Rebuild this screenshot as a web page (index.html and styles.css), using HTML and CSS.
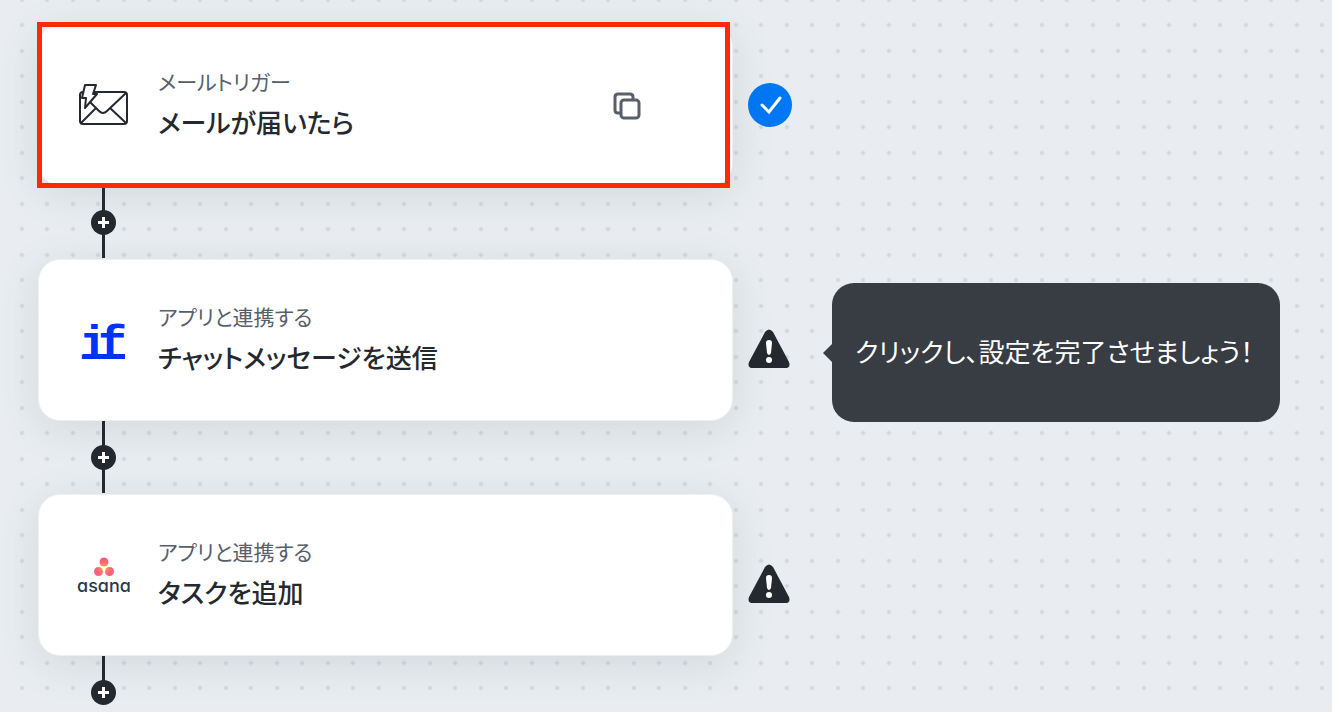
FILE: index.html
```html
<!DOCTYPE html>
<html lang="ja">
  <head>
    <meta charset="UTF-8" />
    <meta name="viewport" content="width=device-width, initial-scale=1.0" />
    <title>フロー</title>
    <link rel="stylesheet" href="styles.css">
  </head>
  <body>
    <main class="flow">
      <section class="step">
        <article class="card selected">
          <div class="card-icon">
            <svg width="52" height="52" viewBox="0 0 52 52" fill="none" stroke="#24292f" stroke-width="2" stroke-linejoin="round" stroke-linecap="round">
              <rect x="2" y="12" width="47" height="32" rx="3" />
              <path d="M48 13L29 31q-4 4-8 0L12 22M3 43l15-15M48 43L32 28" />
              <path d="M7 5h11l-3 9h4L7 28l1-10H4z" fill="#fff" />
            </svg>
          </div>
          <div class="card-text">
            <p class="card-type">メールトリガー</p>
            <h2 class="card-title">メールが届いたら</h2>
          </div>
          <button class="copy" type="button" aria-label="コピー">
            <svg width="28" height="28" viewBox="0 0 28 28" fill="none" stroke="#57606a" stroke-width="3" stroke-linejoin="round">
              <path d="M7 21H5q-3 0-3-3V5q0-3 3-3h12q3 0 3 3v2" />
              <rect x="8" y="8" width="18" height="18" rx="3" />
            </svg>
          </button>
        </article>
        <div class="status">
          <svg width="44" height="44" viewBox="0 0 44 44" fill="none">
            <circle cx="22" cy="22" r="22" fill="#0077f4" />
            <path d="M14 22l7 7 11-14" stroke="#fff" stroke-width="3" stroke-linecap="round" />
          </svg>
        </div>
      </section>

      <div class="connector">
        <button class="add" type="button" aria-label="追加"></button>
      </div>

      <section class="step">
        <article class="card">
          <div class="card-icon">
            <svg class="logo-if" width="52" height="52" viewBox="0 0 52 52">
              <text x="1 20" y="44">if</text>
              <rect x="5" y="39" width="42" height="5" />
            </svg>
          </div>
          <div class="card-text">
            <p class="card-type">アプリと連携する</p>
            <h2 class="card-title">チャットメッセージを送信</h2>
          </div>
        </article>
        <div class="status warning">
          <svg width="42" height="40" viewBox="0 0 42 40">
            <path d="M17 3q4-5 8 0l16 30q2 6-4 6H5q-6 0-4-6z" fill="#24292f" />
            <path d="M21 11q3 0 3 3l-1 10q-2 4-4 0l-1-10q0-3 3-3z" fill="#fff" />
            <circle cx="21" cy="31" r="3" fill="#fff" />
          </svg>
          <div class="tooltip" role="tooltip">クリックし、設定を完了させましょう！</div>
        </div>
      </section>

      <div class="connector">
        <button class="add" type="button" aria-label="追加"></button>
      </div>

      <section class="step">
        <article class="card">
          <div class="card-icon logo-asana">
            <svg width="20" height="20" viewBox="0 0 20 20">
              <defs>
                <radialGradient id="coral" gradientUnits="userSpaceOnUse" cx="10" cy="11" r="11">
                  <stop offset="0" stop-color="#ffb32e" />
                  <stop offset="0.6" stop-color="#fc6478" />
                  <stop offset="1" stop-color="#fc5a85" />
                </radialGradient>
              </defs>
              <g fill="url(#coral)">
                <circle cx="10" cy="5" r="4.5" />
                <circle cx="4.5" cy="14.5" r="4.5" />
                <circle cx="15.5" cy="14.5" r="4.5" />
              </g>
            </svg>
            <span>asana</span>
          </div>
          <div class="card-text">
            <p class="card-type">アプリと連携する</p>
            <h2 class="card-title">タスクを追加</h2>
          </div>
        </article>
        <div class="status warning">
          <svg width="42" height="40" viewBox="0 0 42 40">
            <path d="M17 3q4-5 8 0l16 30q2 6-4 6H5q-6 0-4-6z" fill="#24292f" />
            <path d="M21 11q3 0 3 3l-1 10q-2 4-4 0l-1-10q0-3 3-3z" fill="#fff" />
            <circle cx="21" cy="31" r="3" fill="#fff" />
          </svg>
        </div>
      </section>

      <div class="connector last">
        <button class="add" type="button" aria-label="追加"></button>
      </div>
    </main>
  </body>
</html>
```
FILE: styles.css
```css
* {
  margin: 0;
  padding: 0;
  box-sizing: border-box;
}

/* dotted canvas, four dots in each tile */
body {
  min-height: 100vh;
  font-family: "Noto Sans CJK JP", sans-serif;
  font-feature-settings: "palt";
  color: #24292f;
  background-color: #e9edf1;
  background-image:
    radial-gradient(circle at 22px 25px, #d3d7dc 1px, transparent 3px),
    radial-gradient(circle at 47px 25px, #d3d7dc 1px, transparent 3px),
    radial-gradient(circle at 22px 0, #d3d7dc 1px, transparent 3px),
    radial-gradient(circle at 47px 0, #d3d7dc 1px, transparent 3px),
    radial-gradient(circle at 22px 51px, #d3d7dc 1px, transparent 3px),
    radial-gradient(circle at 47px 51px, #d3d7dc 1px, transparent 3px);
  background-size: 51px 51px;
}

svg {
  display: block;
}

button {
  border: 0;
  background: none;
  cursor: pointer;
}

.flow {
  padding: 24px 38px 0;
}

.step {
  display: flex;
  align-items: center;
  gap: 15px;
}

.card {
  position: relative;
  display: flex;
  align-items: center;
  flex: 0 1 695px;
  min-height: 162px;
  padding: 0 91px 0 39px;
  background: #fff;
  border: 1px solid #edf1f4;
  border-radius: 22px;
  box-shadow: 0 8px 40px rgba(80, 90, 100, 0.14);
}

.selected {
  z-index: 1;
}

/* red frame round the selected card */
.selected::after {
  content: "";
  position: absolute;
  inset: -3px 2px -3px -2px;
  border: 5px solid #ff2a00;
  pointer-events: none;
}

.card-icon {
  flex: none;
  width: 52px;
  margin-right: 28px;
  padding-top: 2px;
}

.card-text {
  flex: 1;
  padding-bottom: 2px;
}

.card-type {
  margin-bottom: 8px;
  font-size: 21px;
  line-height: 28px;
  color: #57606a;
}

.card-title {
  font-size: 26px;
  font-weight: 500;
  line-height: 38px;
}

.copy {
  padding-top: 2px;
}

.logo-if {
  overflow: visible;
  fill: #0032ff;
  font: bold 48px "Liberation Mono", monospace;
}

.logo-asana {
  display: flex;
  flex-direction: column;
  align-items: center;
  font: 500 18px/18px Inter, sans-serif;
  font-feature-settings: "cv11";
  color: #2b3a4d;
}

.status {
  position: relative;
  flex: none;
  width: 44px;
}

.warning {
  padding-top: 18px;
}

.tooltip {
  position: absolute;
  top: -28px;
  left: 84px;
  padding: 48px 27px 52px 23px;
  border-radius: 22px;
  background: #383c43;
  color: #fff;
  font-size: 26px;
  line-height: 39px;
  white-space: nowrap;
}

.tooltip::before {
  content: "";
  position: absolute;
  top: 60px;
  left: -9px;
  width: 10px;
  height: 20px;
  background: inherit;
  clip-path: polygon(0 50%, 100% 0, 100% 100%);
}

.connector {
  position: relative;
  display: flex;
  align-items: center;
  justify-content: center;
  width: 131px;
  height: 73px;
  background: linear-gradient(#24292f, #24292f) center top / 3px 72px no-repeat;
}

.last {
  height: 49px;
  align-items: flex-end;
  background-size: 3px 30px;
}

.add {
  width: 25px;
  height: 25px;
  border-radius: 50%;
  background:
    linear-gradient(#fff, #fff) center / 11px 3px no-repeat,
    linear-gradient(#fff, #fff) center / 3px 11px no-repeat,
    #24292f;
}
```
